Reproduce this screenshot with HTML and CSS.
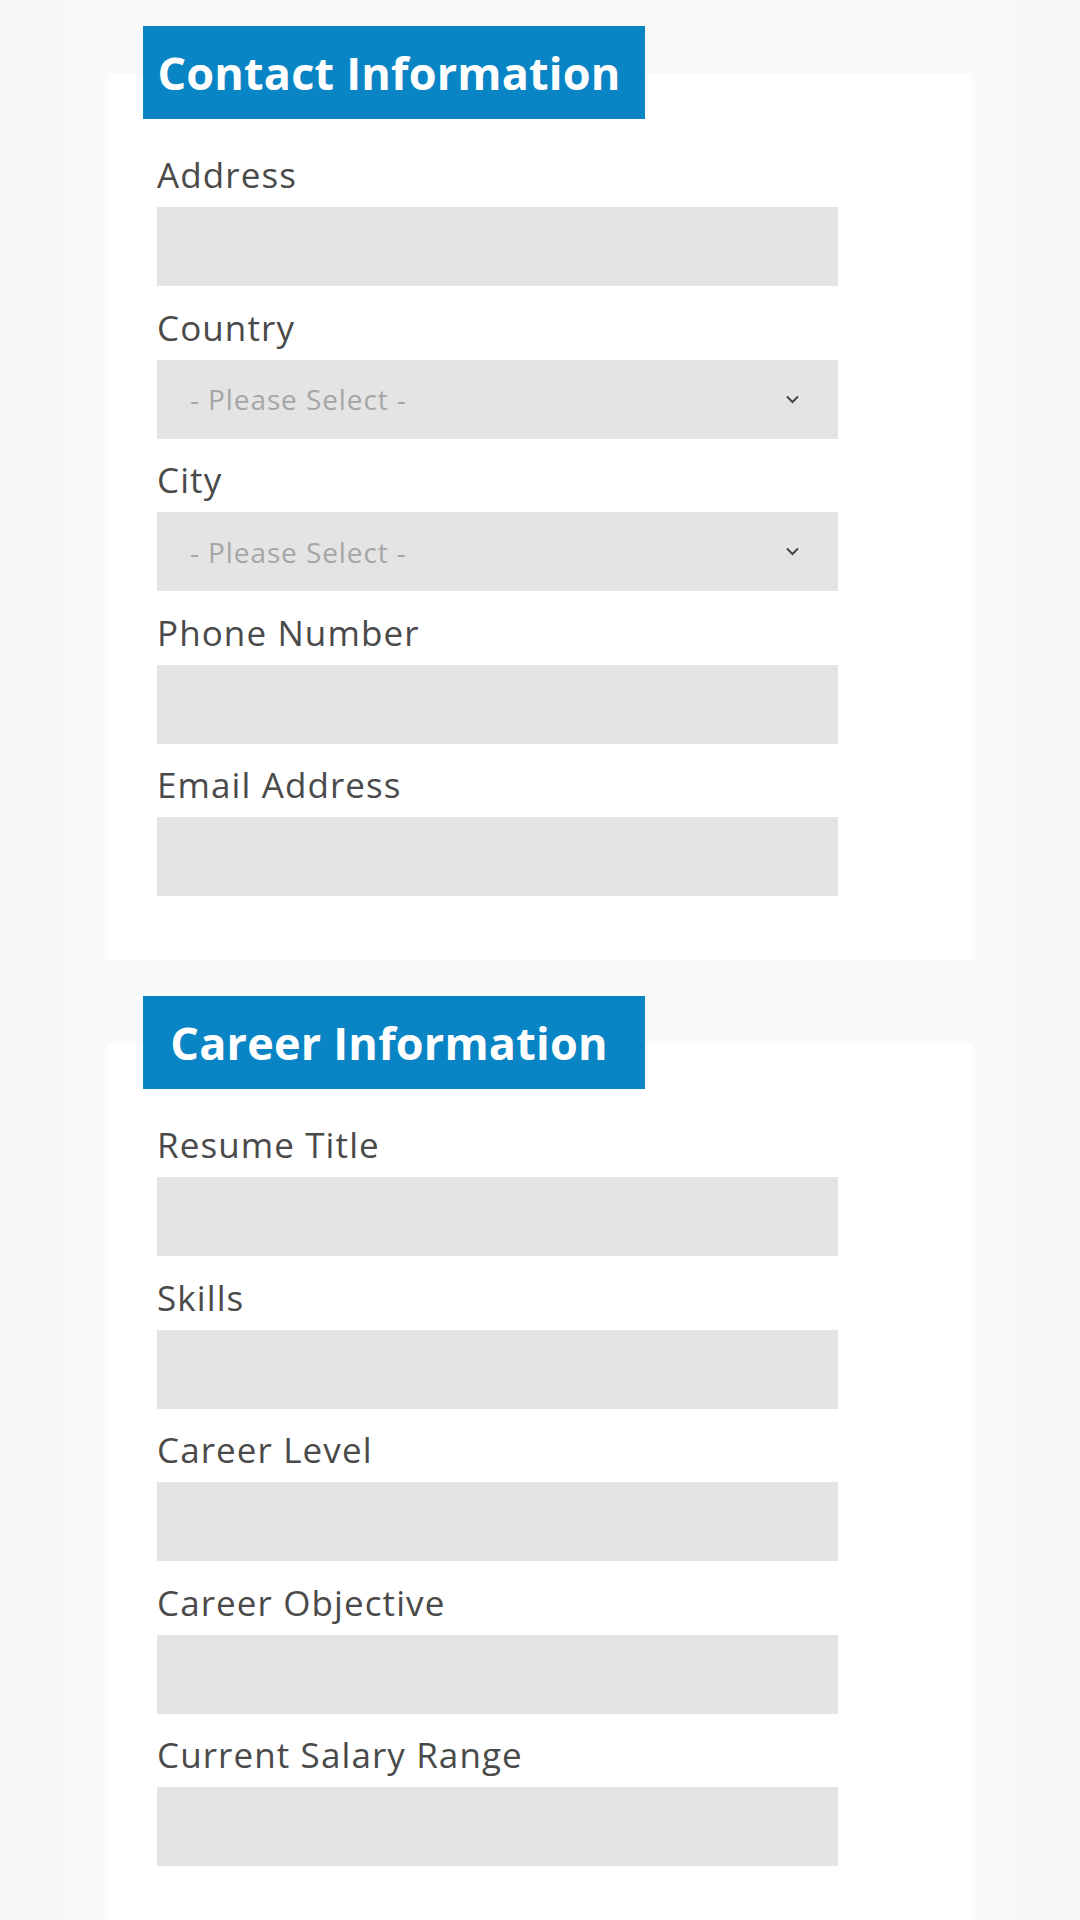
FILE: index.html
```html
<!DOCTYPE html>
<html lang="en">
<head>
<meta charset="utf-8">
<title>Resume Form</title>
<link rel="stylesheet" href="styles.css">
</head>
<body>
<main class="column">
  <section class="section">
    <div class="band">
      <h2 class="section-title">Contact Information</h2>
    </div>
    <div class="panel">
      <div class="field">
        <label class="label">Address</label>
        <input class="input" type="text">
      </div>
      <div class="field">
        <label class="label">Country</label>
        <div class="select">
          <span class="placeholder">- Please Select -</span>
          <svg class="chevron" width="13" height="9" viewBox="0 0 13 9"><path d="M1 1.5 L6.5 7 L12 1.5" fill="none" stroke="#444" stroke-width="2"/></svg>
        </div>
      </div>
      <div class="field">
        <label class="label">City</label>
        <div class="select">
          <span class="placeholder">- Please Select -</span>
          <svg class="chevron" width="13" height="9" viewBox="0 0 13 9"><path d="M1 1.5 L6.5 7 L12 1.5" fill="none" stroke="#444" stroke-width="2"/></svg>
        </div>
      </div>
      <div class="field">
        <label class="label">Phone Number</label>
        <input class="input" type="text">
      </div>
      <div class="field">
        <label class="label">Email Address</label>
        <input class="input" type="text">
      </div>
    </div>
  </section>
  <section class="section">
    <div class="band">
      <h2 class="section-title">Career Information</h2>
    </div>
    <div class="panel">
      <div class="field">
        <label class="label">Resume Title</label>
        <input class="input" type="text">
      </div>
      <div class="field">
        <label class="label">Skills</label>
        <input class="input" type="text">
      </div>
      <div class="field">
        <label class="label">Career Level</label>
        <input class="input" type="text">
      </div>
      <div class="field">
        <label class="label">Career Objective</label>
        <input class="input" type="text">
      </div>
      <div class="field">
        <label class="label">Current Salary Range</label>
        <input class="input" type="text">
      </div>
    </div>
  </section>
</main>
</body>
</html>
```

FILE: styles.css
```css
* { box-sizing: border-box; }

html, body {
  margin: 0;
  padding: 0;
  background: #f7f7f7;
  font-family: "Open Sans", "Noto Sans", sans-serif;
}

body {
  height: 1920px;
  overflow: hidden;
}

.column {
  width: 950px;
  margin: -10px auto 0;
  background: #fafafa;
  padding: 0 43px;
  min-height: 1940px;
}

.section {
  display: flex;
  flex-direction: column;
}

.band {
  padding: 36px 0 0 35px;
  height: 84px;
}

.section-title {
  position: relative;
  z-index: 1;
  margin: 0;
  width: 502px;
  height: 93px;
  padding: 0 20px 0 10px;
  display: flex;
  align-items: center;
  justify-content: center;
  background: #0984c4;
  color: #ffffff;
  font-family: "Open Sans", "Noto Sans", sans-serif;
  font-weight: 700;
  font-size: 45px;
  letter-spacing: 0.2px;
  white-space: nowrap;
}

.panel {
  background: #ffffff;
  padding: 77px 0 64px 49px;
  display: flex;
  flex-direction: column;
  gap: 17.5px;
}

.field {
  display: flex;
  flex-direction: column;
}

.label {
  font-size: 35px;
  line-height: 48px;
  height: 48px;
  margin-bottom: 8px;
  color: #4a4a4a;
  letter-spacing: 1.1px;
}

.input {
  display: block;
  width: 681px;
  height: 79px;
  border: none;
  margin: 0;
  background: #e4e4e4;
  outline: none;
  font-family: inherit;
}

.select {
  width: 681px;
  height: 79px;
  background: #e4e4e4;
  display: flex;
  align-items: center;
  justify-content: space-between;
  padding: 0 39px 0 33px;
}

.placeholder {
  font-size: 28px;
  color: #a6a6a6;
  letter-spacing: 0.9px;
}

.chevron {
  display: block;
}
```
